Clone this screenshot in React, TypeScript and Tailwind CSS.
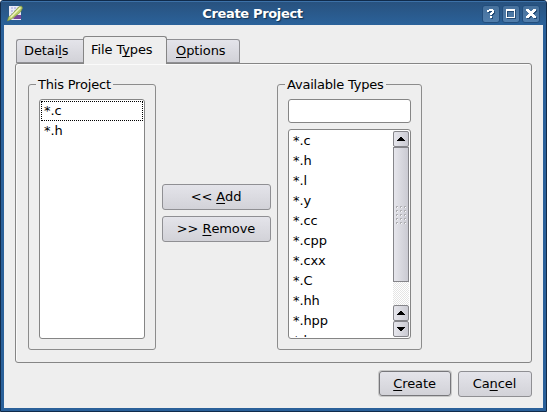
import React from "react";

const types = ["*.c", "*.h", "*.l", "*.y", "*.cc", "*.cpp", "*.cxx", "*.C", "*.hh", "*.hpp", "*.hxx"];

function Key({ children }: { children: string }) {
  return (
    <span className="underline decoration-1 underline-offset-2 [text-decoration-skip-ink:none]">{children}</span>
  );
}

function Button({ className, children }: { className: string; children: React.ReactNode }) {
  return (
    <button
      className={`flex shrink-0 items-center justify-center rounded-[3px] border border-[#8f8f93] bg-linear-to-b from-[#e4e4ea] to-[#d2d2d8] pr-px pb-[2px] whitespace-pre ${className}`}
    >
      {children}
    </button>
  );
}

function TitleButton({ children }: { children: React.ReactNode }) {
  return (
    <div className="flex h-[18px] w-[18px] items-center justify-center rounded-[3px] border border-[#234e7d] bg-linear-to-b from-[#47719c] to-[#517eac]">
      <svg width="16" height="16" viewBox="0 0 16 16" shapeRendering="crispEdges">
        {children}
      </svg>
    </div>
  );
}

function Arrow({ down = false, className }: { down?: boolean; className: string }) {
  return (
    <div
      className={`flex w-4 shrink-0 items-center justify-center rounded-[2px] border border-[#85858a] bg-linear-to-r from-[#e6e6ec] to-[#cbcbd3] ${className}`}
    >
      <svg width="8" height="4" viewBox="0 0 8 4" shapeRendering="crispEdges">
        <path d={down ? "M0 0H8V1H7V2H6V3H5V4H3V3H2V2H1V1H0Z" : "M3 0H5V1H6V2H7V3H8V4H0V3H1V2H2V1H3Z"} />
      </svg>
    </div>
  );
}

function Group({ title, className, children }: { title: string; className: string; children: React.ReactNode }) {
  return (
    <fieldset className={`h-[273px] shrink-0 rounded-[3px] border border-[#8c8c8c] px-[10px] ${className}`}>
      <legend className="-ml-[3px] h-[15px] px-[2px] leading-[15px] tracking-[-0.2px] whitespace-nowrap">{title}</legend>
      {children}
    </fieldset>
  );
}

const questionMark = "M5 4H6V3H10V4H11V7H10V8H9V9H7V7H8V6H9V5H6V6H4V4ZM7 10H9V12H7Z";
const maximizeMark = "M3 3H12V12H3ZM4 5V11H11V5Z";
const closeMark = "M3 3H6V4H7V5H9V4H10V3H13V5H12V6H11V7H10V8H11V9H12V10H13V12H10V11H9V10H7V11H6V12H3V10H4V9H5V8H6V7H5V6H4V5H3Z";

function Mark({ d }: { d: string }) {
  return (
    <>
      <path d={d} fill="#234a74" fillRule="evenodd" transform="translate(1 1)" />
      <path d={d} fill="#ffffff" fillRule="evenodd" />
    </>
  );
}

export default function App() {
  return (
    <div className="flex h-[412px] w-[547px] flex-col overflow-hidden rounded-t-[3px] border border-[#102b4b] bg-[#2a6099] font-['DejaVu_Sans',sans-serif] text-[13px] leading-none tracking-[-0.1px] text-black">
      <header className="flex h-6 shrink-0 items-center border-t border-[#3c71a8] bg-linear-to-b from-[#28527f] to-[#2b629a] pr-[6px] pl-[6px]">
        <svg width="16" height="17" viewBox="0 0 16 17">
          <path d="M2 1h12v14H2z" fill="#e9ebf8" />
          <path d="M4 3h2M7 3h2M4 6h2M7 6h1M4 9h2" stroke="#b8b8e2" strokeWidth="1.5" />
          <path d="M9 10h5v4H6z" fill="#76479a" />
          <path d="M.5 16l1-4 3-2 7-8 3-1 1 2-2 4-5 4-4 3z" fill="#b9cd68" stroke="#7d9140" strokeWidth=".7" />
          <path d="M3.5 12.5L13.5 2.5" stroke="#eff5bf" strokeWidth="1.5" />
        </svg>
        <h1 className="flex-1 text-center text-[13px] font-bold tracking-[-0.35px] text-white [text-shadow:1px_1px_1px_#12304f]">
          Create Project
        </h1>
        <div className="flex gap-[2px]">
          <TitleButton>
            <Mark d={questionMark} />
          </TitleButton>
          <TitleButton>
            <Mark d={maximizeMark} />
          </TitleButton>
          <TitleButton>
            <Mark d={closeMark} />
          </TitleButton>
        </div>
      </header>

      <main className="mx-[3px] mb-[3px] flex flex-1 flex-col bg-[#eeeeee] px-[11px] pt-[11px]">
        <nav className="z-10 -mb-px flex h-[28px] shrink-0 items-end pl-px">
          <div className="mb-px flex h-[24px] w-[67px] items-center rounded-tl-[3px] border border-r-0 border-[#8f8f93] bg-linear-to-b from-[#e4e4ea] to-[#d2d2d8] pb-[2px] pl-[7px]">
            <span>Detai<Key>l</Key>s</span>
          </div>
          <div className="flex h-[28px] w-[84px] items-center rounded-t-[3px] border border-b-0 border-[#858585] bg-[#eeeeee] pb-[2px] pl-[7px]">
            <span>File T<Key>y</Key>pes</span>
          </div>
          <div className="mb-px flex h-[24px] w-[73px] items-center rounded-tr-[3px] border border-l-0 border-[#8f8f93] bg-linear-to-b from-[#e4e4ea] to-[#d2d2d8] pb-[2px] pl-[9px]">
            <span><Key>O</Key>ptions</span>
          </div>
        </nav>
        <section className="flex h-[300px] w-[517px] shrink-0 rounded-[3px] border border-[#858585] pt-[13px] pl-[12px] shadow-[inset_1px_1px_0_#fafafa]">
          <Group title="This Project" className="w-[128px]">
            <ul className="mt-[7px] h-[240px] w-[106px] rounded-[3px] border border-[#858585] bg-white p-px">
              <li className="flex h-5 items-center border border-dotted border-black pb-[2px] pl-[2px]">*.c</li>
              <li className="flex h-5 items-center pb-[2px] pl-[3px]">*.h</li>
            </ul>
          </Group>
          <div className="ml-[6px] flex flex-col gap-[6px] pt-[107px]">
            <Button className="h-[26px] w-[109px]">{"<< "}<Key>A</Key>dd</Button>
            <Button className="h-[26px] w-[109px]">{">> "}<Key>R</Key>emove</Button>
          </div>
          <Group title="Available Types" className="ml-[6px] w-[145px]">
            <input className="mt-[7px] block h-[24px] w-[123px] rounded-[3px] border border-[#858585] bg-white" />
            <div className="mt-[6px] flex h-[210px] w-[123px] rounded-[3px] border border-[#858585] bg-white p-px">
              <ul className="flex-1 overflow-hidden">
                {types.map((t) => (
                  <li key={t} className="flex h-5 items-center pb-[2px] pl-[3px]">{t}</li>
                ))}
              </ul>
              <div className="flex w-4 flex-col bg-[repeating-conic-gradient(#ffffff_0_25%,#e4e4e4_0_50%)] bg-size-[2px_2px]">
                <Arrow className="h-4" />
                <div className="flex h-[135px] items-center justify-center border border-[#85858a] bg-linear-to-r from-[#e6e6ec] to-[#cbcbd3]">
                  <svg width="11" height="18" viewBox="0 0 11 18" shapeRendering="crispEdges">
                    {[0, 4, 8, 12, 16].map((y) =>
                      [0, 4, 8].map((x) => (
                        <g key={`${x}-${y}`}>
                          <path d={`M${x + 1} ${y + 1}h1v1h-1z`} fill="#fff" />
                          <path d={`M${x} ${y}h2v1h-1v1h-1z`} fill="#b0b0b4" />
                        </g>
                      ))
                    )}
                  </svg>
                </div>
                <Arrow className="mt-auto h-4" />
                <Arrow down className="h-4" />
              </div>
            </div>
          </Group>
        </section>
        <footer className="mt-[8px] flex h-[26px] w-[517px] justify-end gap-[7px]">
          <Button className="h-[25px] w-[72px] border-[#77777b] pt-[2px] ring-1 ring-[#c8c8c8]"><Key>C</Key>reate</Button>
          <Button className="h-[26px] w-[74px]">Ca<Key>n</Key>cel</Button>
        </footer>
      </main>
    </div>
  );
}
